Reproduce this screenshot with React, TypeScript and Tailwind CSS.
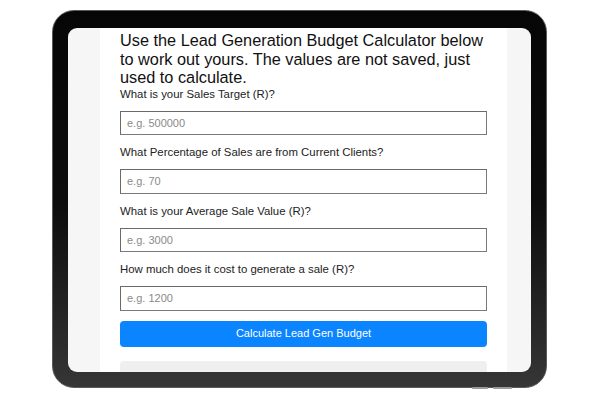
import React from "react";

const fields = [
  { label: "What is your Sales Target (R)?", ph: "e.g. 500000" },
  { label: "What Percentage of Sales are from Current Clients?", ph: "e.g. 70" },
  { label: "What is your Average Sale Value (R)?", ph: "e.g. 3000" },
  { label: "How much does it cost to generate a sale (R)?", ph: "e.g. 1200" },
];

export default function App() {
  return (
    <div className="w-[600px] h-[400px] bg-white relative overflow-hidden" style={{ fontFamily: '"Liberation Sans", Arial, sans-serif' }}>
      <div className="absolute left-[52px] top-[10px] w-[495px] h-[378px] rounded-[22px] bg-gradient-to-b from-[#060606] via-[#0c0c0c] to-[#363636] border border-[#5a5a5a] pt-[17px] pl-[15px] pr-[15px] pb-[15px]">
        <div className="w-full h-full rounded-[9px] bg-[#f6f6f6] overflow-hidden flex justify-start pl-[32px]">
          <div className="w-[407px] h-full bg-white px-[20px] pt-[3px] flex flex-col">
            <h1 className="shrink-0 text-[16.3px] leading-[18.5px] text-[#111] font-normal">
              Use the Lead Generation Budget Calculator below to work out yours. The values are not saved, just used to calculate.
            </h1>
            {fields.map((f, i) => (
              <div key={i} className="shrink-0 flex flex-col">
                <label className={`${i === 0 ? "mt-0" : "mt-[10px]"} text-[11.4px] leading-[14px] text-[#222]`}>{f.label}</label>
                <div className="mt-[10px] h-[24.5px] border border-[#7a7a7a] border-t-[#6a6a6a] border-l-[#6a6a6a] flex items-center px-[6px] bg-white">
                  <span className="text-[11px] text-[#8a8a8a]">{f.ph}</span>
                </div>
              </div>
            ))}
            <div className="shrink-0 mt-[10px] h-[26px] rounded-[4px] bg-[#0b84ff] flex items-center justify-center text-white text-[11px]">
              Calculate Lead Gen Budget
            </div>
            <div className="shrink-0 mt-[14px] h-[40px] rounded-[4px] bg-[#efefef]" />
          </div>
        </div>
      </div>
      <div className="absolute left-[472px] top-[387px] w-[16px] h-[2px] rounded-sm bg-[#9a9a9a]" />
      <div className="absolute left-[493px] top-[387px] w-[19px] h-[2px] rounded-sm bg-[#9a9a9a]" />
    </div>
  );
}
